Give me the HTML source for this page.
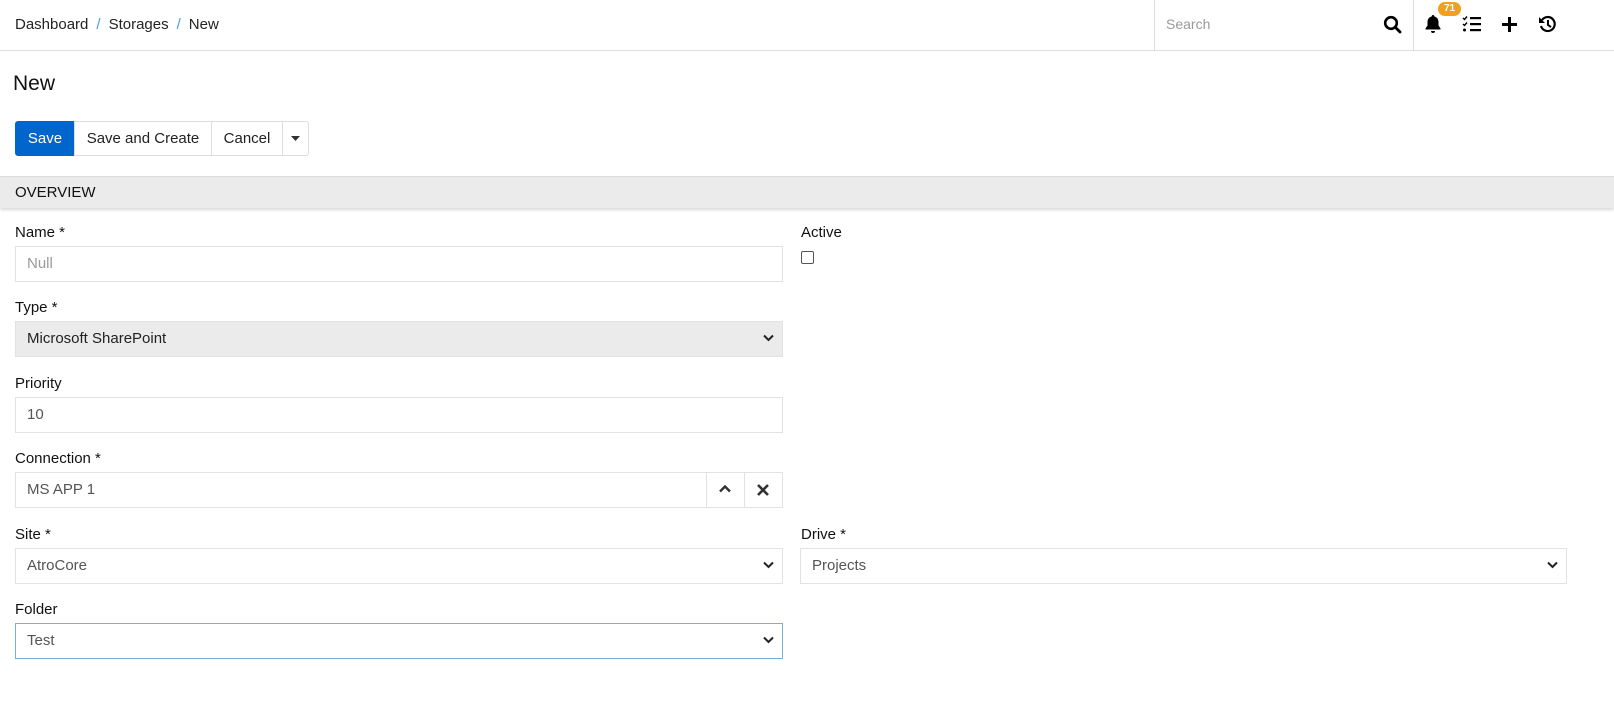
<!DOCTYPE html>
<html><head><meta charset="utf-8"><style>
*{box-sizing:border-box;margin:0;padding:0}
body{width:1614px;height:704px;background:#fff;font-family:"Liberation Sans",sans-serif;color:#000;position:relative;overflow:hidden;font-size:15px}
.a{position:absolute}
.hdr{left:0;top:0;width:1614px;height:51px;border-bottom:1px solid #ddd}
.bc{left:15px;top:16px;font-size:15px;color:#222}
.bc span{color:#4a9ee0;margin:0 8px}
.lbl{font-size:15px;color:#111}
.inp{border:1px solid #e2e2e2;height:36px;padding-left:11px;line-height:34px;color:#555;font-size:15px;background:#fff}
.chev{position:absolute;right:8px;top:12px}
.btn{top:121px;height:35px;border:1px solid #ddd;line-height:33px;text-align:center;font-size:15px;color:#222;background:#fff}
</style></head><body>
<div class="a hdr"></div>
<div class="a bc">Dashboard<span>/</span>Storages<span>/</span>New</div>
<div class="a" style="left:1154px;top:0;width:1px;height:51px;background:#ddd"></div>
<div class="a" style="left:1413px;top:0;width:1px;height:51px;background:#ddd"></div>
<div class="a" style="left:1166px;top:16px;color:#999;font-size:14px">Search</div>
<svg class="a" style="left:1383px;top:15px" width="20" height="20" viewBox="0 0 20 20"><circle cx="8" cy="8" r="5.8" fill="none" stroke="#000" stroke-width="2.6"/><line x1="12.3" y1="12.3" x2="17" y2="17" stroke="#000" stroke-width="2.8" stroke-linecap="round"/></svg>
<svg class="a" style="left:1424px;top:14px" width="18" height="20" viewBox="0 0 18 20"><path d="M9 1c1 0 1.3.7 1.3 1.5C13 3 14.5 5.3 14.5 8v3.5l2 3v1h-15v-1l2-3V8c0-2.7 1.5-5 4.2-5.5C7.7 1.7 8 1 9 1z" fill="#000"/><path d="M7 17h4a2 2 0 0 1-4 0z" fill="#000"/></svg>
<div class="a" style="left:1438px;top:2px;width:23px;height:14px;border-radius:7px;background:#f0a020;color:#fff;font-size:10px;font-weight:bold;text-align:center;line-height:14px">71</div>
<svg class="a" style="left:1462px;top:15px" width="20" height="18" viewBox="0 0 20 18"><path d="M1 3l1.5 1.5L5 1.5M1 9l1.5 1.5L5 7.5" stroke="#000" stroke-width="1.4" fill="none"/><circle cx="2.5" cy="15" r="1.5"/><rect x="8" y="2" width="11" height="2.2"/><rect x="8" y="8" width="11" height="2.2"/><rect x="8" y="14" width="11" height="2.2"/></svg>
<svg class="a" style="left:1501px;top:16px" width="17" height="17" viewBox="0 0 17 17"><rect x="7" y="1" width="3" height="15"/><rect x="1" y="7" width="15" height="3"/></svg>
<svg class="a" style="left:1538px;top:15px" width="19" height="19" viewBox="0 0 19 19"><path d="M4 5A7 7 0 1 1 3 11" fill="none" stroke="#000" stroke-width="2.2"/><path d="M1 2v6h6z"/><path d="M10 5v5l3 2" fill="none" stroke="#000" stroke-width="2"/></svg>

<div class="a" style="left:13px;top:72px;font-size:21px;color:#111">New</div>

<div class="a btn" style="left:15px;width:60px;background:#0066cc;border-color:#0066cc;color:#fff;border-radius:3px 0 0 3px">Save</div>
<div class="a btn" style="left:74px;width:138px">Save and Create</div>
<div class="a btn" style="left:211px;width:72px">Cancel</div>
<div class="a btn" style="left:282px;width:27px;border-radius:0 3px 3px 0"><svg width="9" height="5" viewBox="0 0 9 5" style="margin-top:14px;display:block;margin-left:8px"><path d="M0 0h9L4.5 5z" fill="#333"/></svg></div>

<div class="a" style="left:0;top:176px;width:1614px;height:32px;background:#ebebeb;border-top:1px solid #ddd;box-shadow:0 2px 3px rgba(0,0,0,.15);padding:7px 15px;font-size:15px;color:#111">OVERVIEW</div>

<div class="a lbl" style="left:15px;top:224px">Name *</div>
<div class="a inp" style="left:15px;top:246px;width:768px;color:#999">Null</div>
<div class="a lbl" style="left:801px;top:224px">Active</div>
<div class="a" style="left:801px;top:251px;width:13px;height:13px;border:1px solid #555;border-radius:2px"></div>

<div class="a lbl" style="left:15px;top:299px">Type *</div>
<div class="a inp" style="left:15px;top:321px;width:768px;background:#ebebeb;color:#222">Microsoft SharePoint<svg class="chev" width="11" height="8" viewBox="0 0 11 8"><path d="M1 1.5l4.5 4.5 4.5-4.5" stroke="#222" stroke-width="2" fill="none"/></svg></div>

<div class="a lbl" style="left:15px;top:375px">Priority</div>
<div class="a inp" style="left:15px;top:397px;width:768px">10</div>

<div class="a lbl" style="left:15px;top:450px">Connection *</div>
<div class="a inp" style="left:15px;top:472px;width:768px">MS APP 1</div>
<div class="a" style="left:706px;top:472px;width:1px;height:36px;background:#e2e2e2"></div>
<div class="a" style="left:744px;top:472px;width:1px;height:36px;background:#e2e2e2"></div>
<svg class="a" style="left:719px;top:485px" width="12" height="8" viewBox="0 0 12 8"><path d="M1 6.5l5-5 5 5" stroke="#333" stroke-width="2.4" fill="none"/></svg>
<svg class="a" style="left:757px;top:484px" width="12" height="12" viewBox="0 0 12 12"><path d="M1 1l10 10M11 1L1 11" stroke="#333" stroke-width="2.6"/></svg>

<div class="a lbl" style="left:15px;top:526px">Site *</div>
<div class="a inp" style="left:15px;top:548px;width:768px">AtroCore<svg class="chev" width="11" height="8" viewBox="0 0 11 8"><path d="M1 1.5l4.5 4.5 4.5-4.5" stroke="#222" stroke-width="2" fill="none"/></svg></div>
<div class="a lbl" style="left:801px;top:526px">Drive *</div>
<div class="a inp" style="left:800px;top:548px;width:767px">Projects<svg class="chev" width="11" height="8" viewBox="0 0 11 8"><path d="M1 1.5l4.5 4.5 4.5-4.5" stroke="#222" stroke-width="2" fill="none"/></svg></div>

<div class="a lbl" style="left:15px;top:601px">Folder</div>
<div class="a inp" style="left:15px;top:623px;width:768px;border-color:#7aaedc">Test<svg class="chev" width="11" height="8" viewBox="0 0 11 8"><path d="M1 1.5l4.5 4.5 4.5-4.5" stroke="#222" stroke-width="2" fill="none"/></svg></div>
</body></html>
